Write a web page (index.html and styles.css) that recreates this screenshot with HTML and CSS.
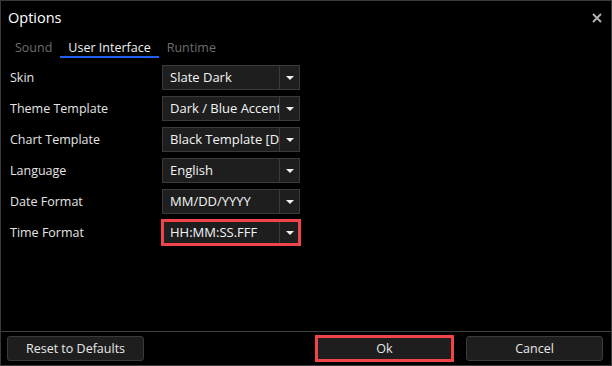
FILE: index.html
```html
<!DOCTYPE html>
<html lang="en">
<head>
    <meta charset="UTF-8">
    <title>Options</title>
    <link rel="stylesheet" href="styles.css">
</head>
<body>
    <div class="window">
        <div class="titlebar">
            <span class="title">Options</span>
            <svg class="close" width="10" height="10" viewBox="0 0 10 10">
                <path d="M1 1 L9 9 M9 1 L1 9" stroke="#b4b4b4" stroke-width="1.8"/>
            </svg>
        </div>

        <div class="tabs">
            <span class="tab">Sound</span>
            <span class="tab active">User Interface</span>
            <span class="tab">Runtime</span>
        </div>

        <div class="content">
            <div class="row">
                <span class="label">Skin</span>
                <div class="combo"><span class="value">Slate Dark</span><span class="drop"></span></div>
            </div>
            <div class="row">
                <span class="label">Theme Template</span>
                <div class="combo"><span class="value">Dark / Blue Accent</span><span class="drop"></span></div>
            </div>
            <div class="row">
                <span class="label">Chart Template</span>
                <div class="combo"><span class="value">Black Template [Default]</span><span class="drop"></span></div>
            </div>
            <div class="row">
                <span class="label">Language</span>
                <div class="combo"><span class="value">English</span><span class="drop"></span></div>
            </div>
            <div class="row">
                <span class="label">Date Format</span>
                <div class="combo"><span class="value">MM/DD/YYYY</span><span class="drop"></span></div>
            </div>
            <div class="row">
                <span class="label">Time Format</span>
                <div class="combo marked"><span class="value">HH:MM:SS.FFF</span><span class="drop"></span></div>
            </div>
        </div>

        <div class="footer">
            <button class="btn">Reset to Defaults</button>
            <span class="spacer"></span>
            <button class="btn marked">Ok</button>
            <button class="btn">Cancel</button>
        </div>
    </div>
</body>
</html>
```

FILE: styles.css
```css
* {
    margin: 0;
    padding: 0;
    box-sizing: border-box;
}

body {
    background: #000;
    font-family: 'Open Sans', 'Noto Sans', sans-serif;
    font-size: 12.5px;
    color: #e8e8e8;
}

.window {
    width: 612px;
    height: 366px;
    border: 1px solid #3a3a3a;
    display: flex;
    flex-direction: column;
}

/* Title bar */
.titlebar {
    height: 37px;
    display: flex;
    align-items: center;
    justify-content: space-between;
    padding: 0 9px 4px 7px;
}

.title {
    font-size: 14.5px;
    color: #fff;
}

/* Tabs */
.tabs {
    display: flex;
    padding-left: 6px;
    height: 20px;
}

.tab {
    padding: 0 8px;
    color: #6e6e6e;
    line-height: 19px;
    border-bottom: 2px solid transparent;
}

.tab.active {
    color: #f0f0f0;
    border-bottom-color: #2160f0;
}

/* Form */
.content {
    flex: 1;
    display: flex;
    flex-direction: column;
    gap: 6px;
    padding: 7px 0 0 9px;
}

.row {
    display: flex;
    align-items: center;
    height: 25px;
}

.label {
    width: 152px;
    color: #e4e4e4;
}

.combo {
    width: 138px;
    height: 25px;
    display: flex;
    border: 1px solid #3a3a3a;
    background: #1e1e1e;
}

.combo .value {
    flex: 1;
    padding-left: 7px;
    line-height: 23px;
    font-size: 13px;
    white-space: nowrap;
    overflow: hidden;
    color: #f4f4f4;
}

.combo .drop {
    width: 20px;
    border-left: 1px solid #3a3a3a;
    display: flex;
    align-items: center;
    justify-content: center;
}

.combo .drop::after {
    content: '';
    border-left: 4px solid transparent;
    border-right: 4px solid transparent;
    border-top: 4px solid #f0f0f0;
}

.marked {
    outline: 3px solid #f0444a;
    outline-offset: -2px;
}

/* Footer */
.footer {
    height: 34px;
    border-top: 1px solid #404040;
    display: flex;
    align-items: center;
    gap: 13px;
    padding: 0 8px 1px 6px;
}

.spacer {
    flex: 1;
}

.btn {
    width: 137px;
    height: 25px;
    background: #1e1e1e;
    border: 1px solid #3a3a3a;
    border-radius: 3px;
    color: #e8e8e8;
    font-family: inherit;
    font-size: 12.5px;
}

.btn.marked {
    border-radius: 0;
}
```
